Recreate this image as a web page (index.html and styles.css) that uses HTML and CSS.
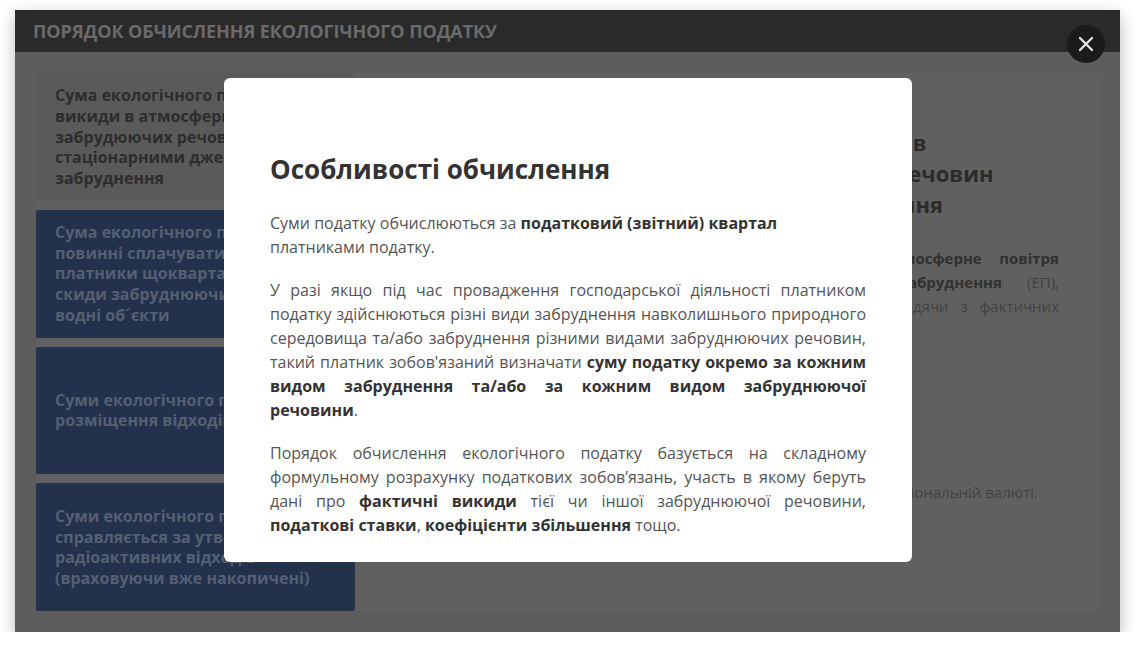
FILE: index.html
```html
<!DOCTYPE html>
<html lang="uk">
<head>
<meta charset="utf-8">
<title>Порядок обчислення екологічного податку</title>
<link rel="stylesheet" href="styles.css">
</head>
<body>
<div class="window">
  <div class="win-header">
    <h1 class="win-title">Порядок обчислення екологічного податку</h1>
  </div>
  <div class="win-body">
    <div class="panel">
      <div class="cards">
        <div class="card card-active">Сума екологічного податку за<br>викиди в атмосферне повітря<br>забрудюючих речовин<br>стаціонарними джерелами<br>забруднення</div>
        <div class="card">Сума екологічного податку, яку<br>повинні сплачувати<br>платники щокварталу за<br>скиди забруднюючих речовин у<br>водні об´єкти</div>
        <div class="card">Суми екологічного податку за<br>розміщення відходів</div>
        <div class="card">Суми екологічного податку, що<br>справляється за утворення<br>радіоактивних відходів<br>(враховуючи вже накопичені)</div>
      </div>
      <div class="content">
        <h2 class="content-title">Сума екологічного податку за усі ці&nbsp; викиди в<br>атмосферне повітря інших забруднюючих речовин<br>стаціонарними джерелами цього забруднення</h2>
        <p class="content-text">
          <span class="line">Сума податку за <b>викиди забруднюючих речовин в атмосферне повітря</b></span>
          <span class="line">стаціонарними джерелами, позначається як <b>податок забруднення</b> (ЕП),</span>
          <span class="line">обчислюється платниками податку самостійно щокварталу, виходячи з фактичних</span>
          <span class="line-last">обсягів викидів.</span>
        </p>
        <div class="formula">ЕП = Σ (М<sub>і</sub> × Нп<sub>і</sub>)</div>
        <p class="content-text">Сума податку, що підлягає сплаті до бюджету, визначається лиш у національній валюті.</p>
      </div>
    </div>
  </div>
  <button class="close" aria-label="Закрити">
    <svg width="16" height="16" viewBox="0 0 16 16"><path d="M2 2L14 14M14 2L2 14" stroke="#e2e2e2" stroke-width="2.4" stroke-linecap="round"/></svg>
  </button>
</div>

<div class="modal">
  <h2 class="modal-title">Особливості обчислення</h2>
  <p class="modal-text modal-text-left">Суми податку обчислюються за <b>податковий (звітний) квартал</b> платниками податку.</p>
  <p class="modal-text">У разі якщо під час провадження господарської діяльності платником податку здійснюються різні види забруднення навколишнього природного середовища та/або забруднення різними видами забруднюючих речовин, такий платник зобов'язаний визначати <b>суму податку окремо за кожним видом забруднення та/або за кожним видом забруднюючої речовини</b>.</p>
  <p class="modal-text">Порядок обчислення екологічного податку базується на складному формульному розрахунку податкових зобов’язань, участь в якому беруть дані про <b>фактичні викиди</b> тієї чи іншої забруднюючої речовини, <b>податкові ставки</b>, <b>коефіцієнти збільшення</b> тощо.</p>
</div>
</body>
</html>
```

FILE: styles.css
```css
* { box-sizing: border-box; }

html, body {
  margin: 0;
  padding: 0;
  background: #ffffff;
  font-family: "Open Sans", "Noto Sans", sans-serif;
  overflow: hidden;
}

.window {
  position: relative;
  margin: 10px 0 0 15px;
  width: 1105px;
  height: 622px;
  background: #5d5d5d;
  box-shadow: 0 6px 16px rgba(0, 0, 0, 0.28);
  display: flex;
  flex-direction: column;
}

.win-header {
  height: 42px;
  background: #2a2a2a;
  display: flex;
  align-items: center;
  padding-left: 18px;
}

.win-title {
  margin: 0;
  font-size: 18px;
  font-weight: 700;
  text-transform: uppercase;
  color: #6a6a6a;
  letter-spacing: -0.1px;
}

.win-body {
  flex: 1;
  padding: 21px;
  display: flex;
}

.panel {
  flex: 1;
  display: flex;
  background: #606060;
  border-radius: 4px;
}

.cards {
  width: 319px;
  display: flex;
  flex-direction: column;
  gap: 9px;
}

.card {
  flex: 1;
  display: flex;
  align-items: center;
  padding: 0 19px;
  background: #23314d;
  color: #555f72;
  font-size: 16px;
  font-weight: 700;
  line-height: 20.6px;
  border-radius: 2px;
}

.card-active {
  background: #5a5a5a;
  color: #2d2d2d;
  border-radius: 4px;
}

.content {
  flex: 1;
  padding: 54px 40px 0 40px;
}

.content-title {
  margin: 0;
  font-size: 22px;
  font-weight: 700;
  line-height: 31px;
  color: #2b2b2b;
}

.content-text {
  margin: 26px 0 0;
  font-size: 15px;
  line-height: 24px;
  color: #424242;
}

.content-text b { color: #303030; }

.line {
  display: block;
  text-align: justify;
  text-align-last: justify;
  white-space: nowrap;
}

.line-last { display: block; }

.formula {
  margin-top: 40px;
  height: 72px;
  text-align: center;
  font-size: 15px;
  color: #424242;
}

.close {
  position: absolute;
  top: 15px;
  right: 15px;
  width: 38px;
  height: 38px;
  border: 0;
  padding: 0;
  border-radius: 50%;
  background: #1b1b1b;
  display: flex;
  align-items: center;
  justify-content: center;
}

.modal {
  position: fixed;
  top: 78px;
  left: 224px;
  width: 688px;
  height: 484px;
  background: #ffffff;
  border-radius: 6px;
  padding: 77px 46px 24px;
}

.modal-title {
  margin: 0 0 27px;
  font-size: 26px;
  font-weight: 700;
  line-height: 29px;
  color: #333333;
}

.modal-text {
  margin: 0 0 19px;
  font-size: 16px;
  line-height: 24px;
  color: #555555;
  text-align: justify;
}

.modal-text-left { text-align: left; }

.modal-text b { color: #333333; }
```
